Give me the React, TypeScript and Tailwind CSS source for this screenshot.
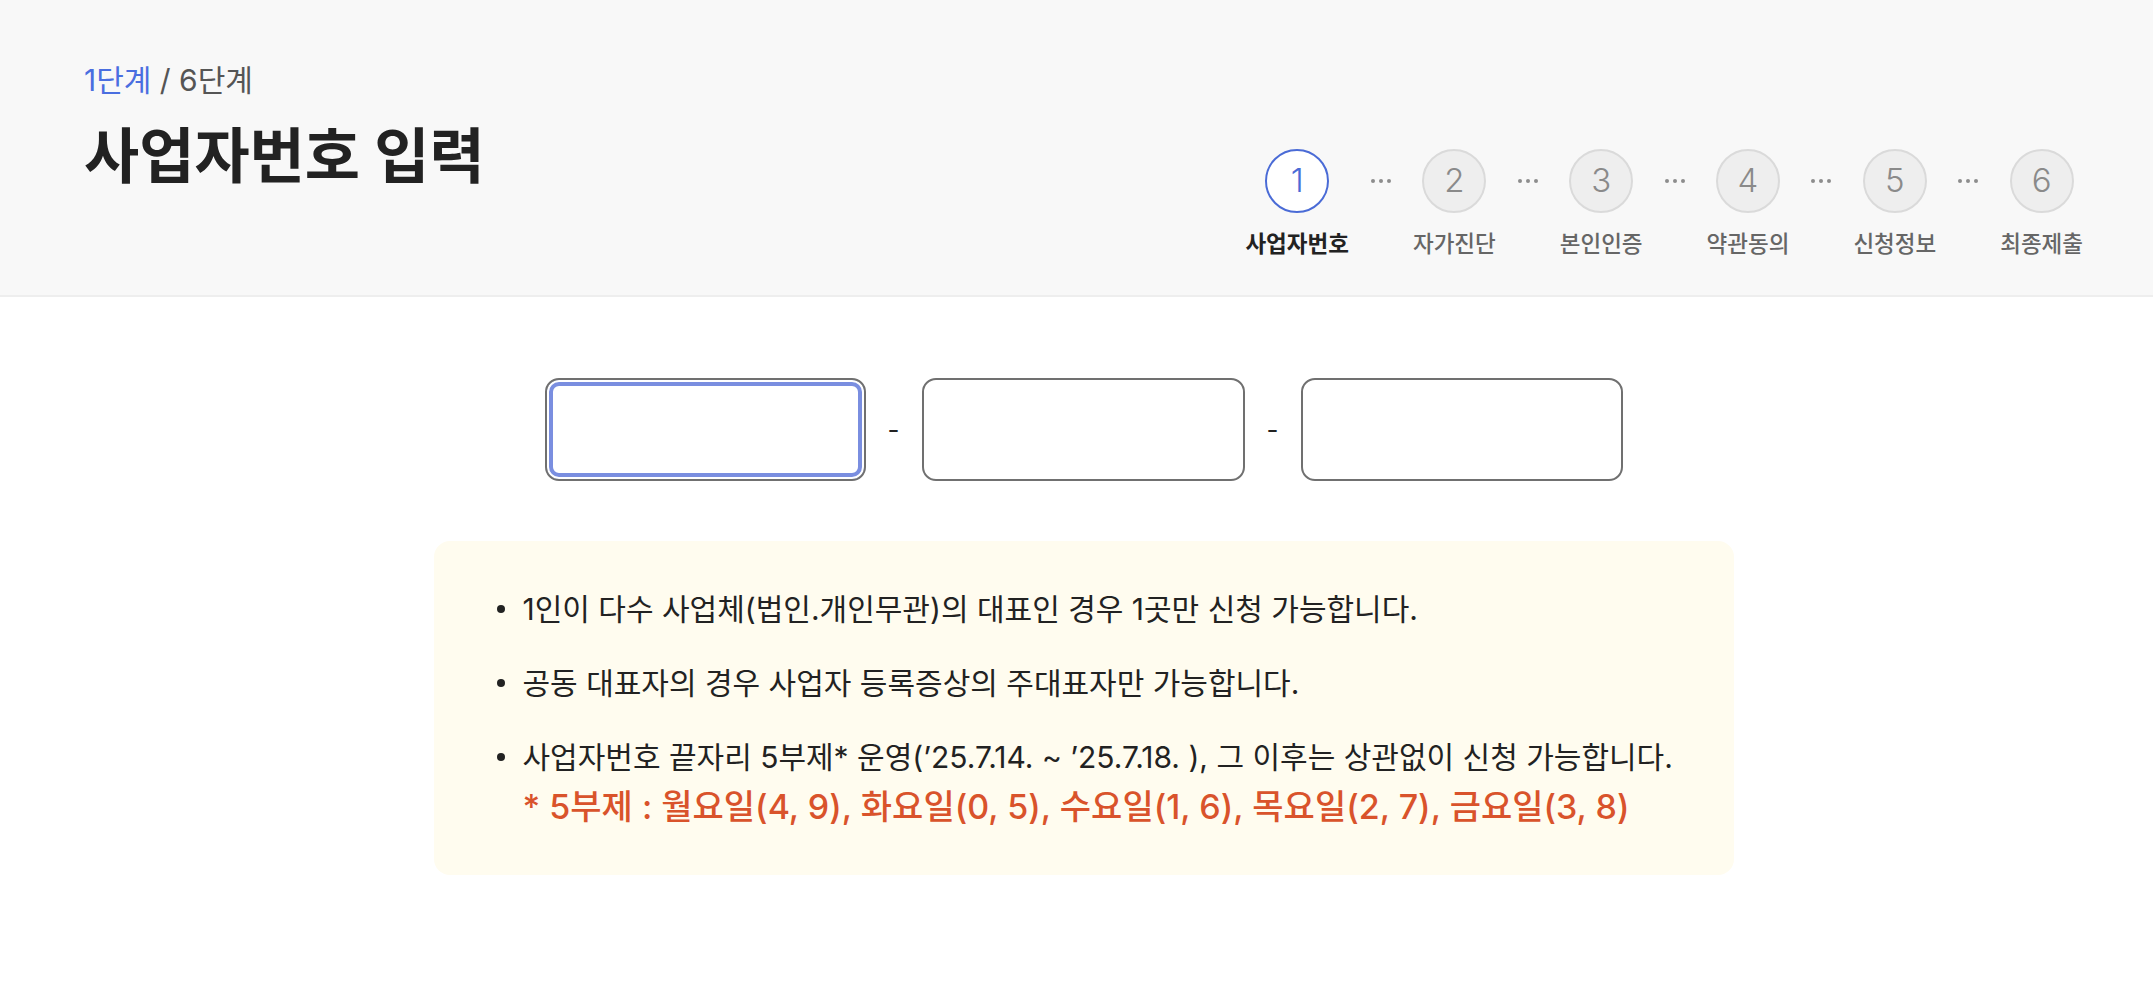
const steps = ["사업자번호", "자가진단", "본인인증", "약관동의", "신청정보", "최종제출"];

function Dots() {
  return (
    <div className="flex h-[64px] w-[22px] items-center justify-between px-[1px]">
      <span className="h-[4px] w-[4px] rounded-full bg-[#8d8d8d]" />
      <span className="h-[4px] w-[4px] rounded-full bg-[#8d8d8d]" />
      <span className="h-[4px] w-[4px] rounded-full bg-[#8d8d8d]" />
    </div>
  );
}

function Stepper() {
  return (
    <div className="mt-[89px] flex items-start gap-[21px]">
      {steps.map((label, i) => {
        const active = i === 0;
        return (
          <div key={label} className="flex items-start gap-[21px]">
            {i > 0 && <Dots />}
            <div className="flex flex-col items-center">
              <div
                className={
                  active
                    ? "flex h-[64px] w-[64px] items-center justify-center rounded-full border-2 border-[#4a6bd6] bg-white text-[33px] font-light text-[#4a6bd6]"
                    : "flex h-[64px] w-[64px] items-center justify-center rounded-full border-2 border-[#dadada] bg-[#eeeeee] text-[33px] font-light text-[#8a8a8a]"
                }
              >
                {i + 1}
              </div>
              <span
                className={
                  active
                    ? "mt-[16px] text-[22.5px] leading-[30px] font-bold text-[#222]"
                    : "mt-[16px] text-[22.5px] leading-[30px] font-medium text-[#666]"
                }
              >
                {label}
              </span>
            </div>
          </div>
        );
      })}
    </div>
  );
}

export default function App() {
  return (
    <div
      className="min-h-screen bg-white text-[#222]"
      style={{ fontFamily: 'Inter, "Noto Sans CJK KR", sans-serif' }}
    >
      {/* Header */}
      <header className="flex h-[297px] justify-between border-b-2 border-[#eeeeee] bg-[#f8f8f8] pl-[84px] pr-[70px] pt-[60px]">
        <div>
          <p className="text-[30px] leading-[40px]">
            <span className="text-[#4a6ee0]">1단계</span>
            <span className="text-[#555]"> / 6단계</span>
          </p>
          <h1 className="mt-[20px] text-[60px] leading-[72px] font-bold text-[#222]">
            사업자번호 입력
          </h1>
        </div>
        <Stepper />
      </header>

      {/* Body */}
      <main className="flex flex-col items-center pt-[81px]">
        <div className="flex items-center gap-[20px] pl-[14px]">
          <input
            className="h-[103px] w-[321px] rounded-[14px] border-2 border-[#707070] bg-white shadow-[inset_0_0_0_2px_#ffffff,inset_0_0_0_6px_#7a8ee0] outline-none"
          />
          <span className="w-[16px] text-center text-[26px]">-</span>
          <input className="h-[103px] w-[323px] rounded-[14px] border-2 border-[#707070] bg-white outline-none" />
          <span className="w-[16px] text-center text-[26px]">-</span>
          <input className="h-[103px] w-[322px] rounded-[14px] border-2 border-[#707070] bg-white outline-none" />
        </div>

        <div className="mt-[60px] ml-[14px] w-[1300px] rounded-[16px] bg-[#fffcef] pb-[43px] pl-[63px] pr-[30px] pt-[43px]">
          <ul className="flex flex-col gap-[24px] text-[30px] leading-[50px] text-[#222]">
            <li className="flex gap-[18px]">
              <span className="mt-[21px] h-[8px] w-[8px] shrink-0 rounded-full bg-[#222]" />
              <span>1인이 다수 사업체(법인.개인무관)의 대표인 경우 1곳만 신청 가능합니다.</span>
            </li>
            <li className="flex gap-[18px]">
              <span className="mt-[21px] h-[8px] w-[8px] shrink-0 rounded-full bg-[#222]" />
              <span>공동 대표자의 경우 사업자 등록증상의 주대표자만 가능합니다.</span>
            </li>
            <li className="flex gap-[18px]">
              <span className="mt-[21px] h-[8px] w-[8px] shrink-0 rounded-full bg-[#222]" />
              <div>
                <p className="whitespace-nowrap">사업자번호 끝자리 5부제* 운영(’25.7.14. ~ ’25.7.18. ), 그 이후는 상관없이 신청 가능합니다.</p>
                <p className="whitespace-nowrap text-[34px] font-medium text-[#d9532b]">
                  * 5부제 : 월요일(4, 9), 화요일(0, 5), 수요일(1, 6), 목요일(2, 7), 금요일(3, 8)
                </p>
              </div>
            </li>
          </ul>
        </div>
      </main>
    </div>
  );
}
